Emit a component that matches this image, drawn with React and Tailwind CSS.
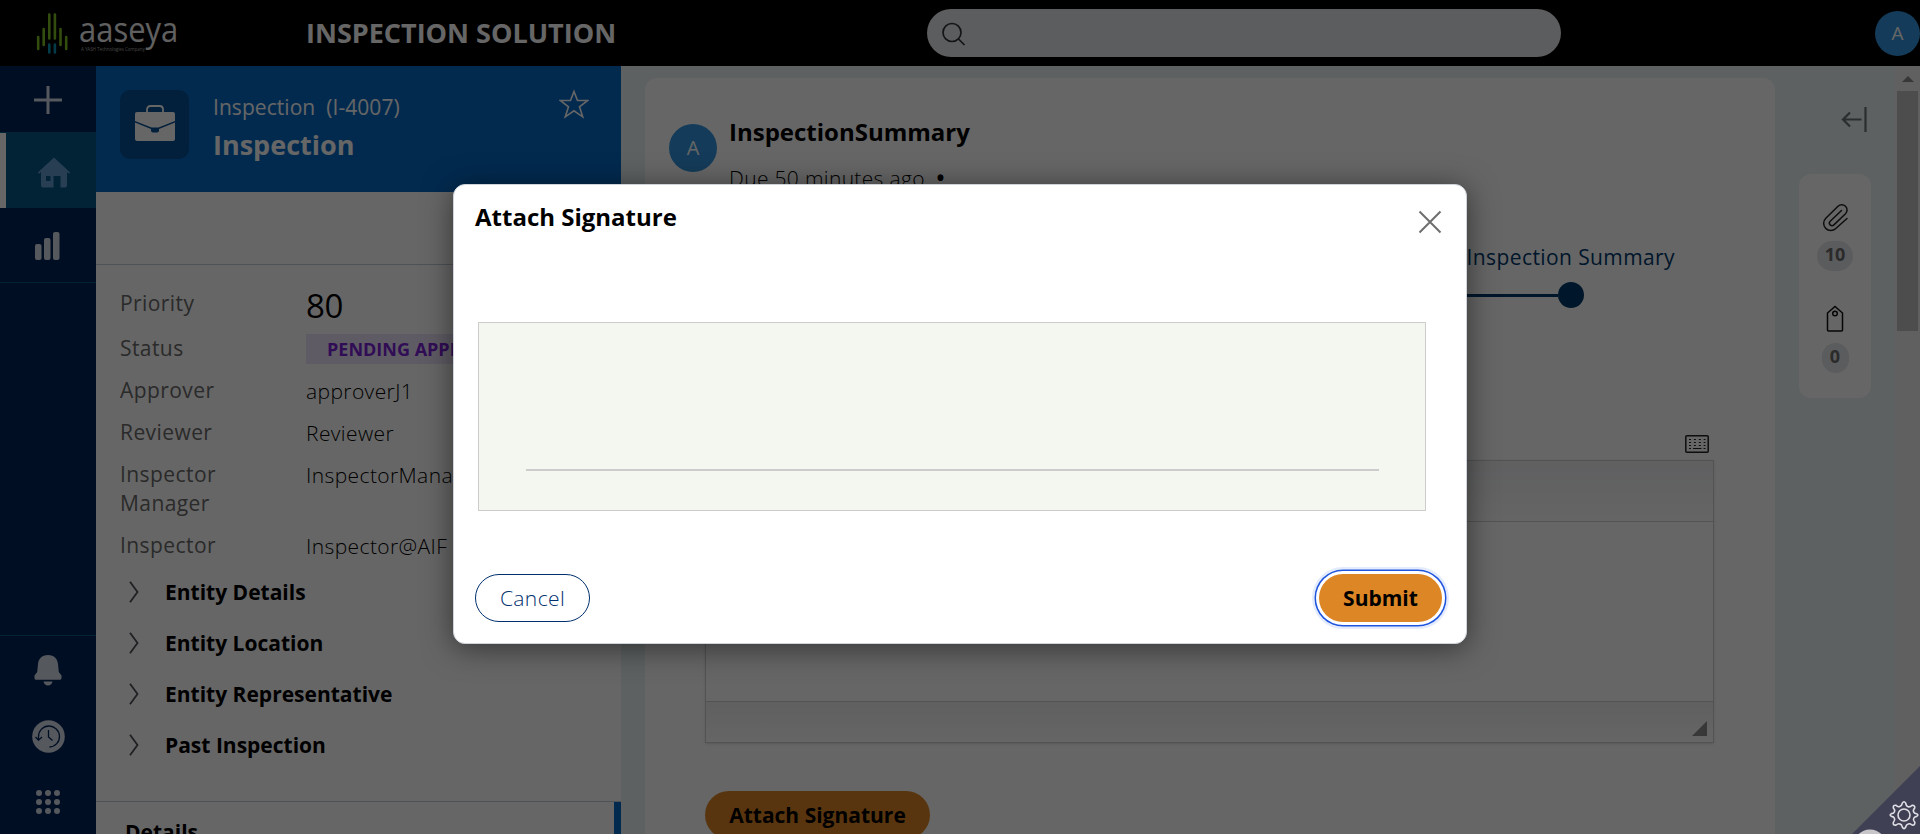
import React from "react";

const details = [
  { label: "Priority", value: "80", kind: "big", h: "h-[45px]" },
  { label: "Status", value: "PENDING APPROVAL", kind: "badge", h: "h-[42px]" },
  { label: "Approver", value: "approverJ1", h: "h-[42px]" },
  { label: "Reviewer", value: "Reviewer", h: "h-[42px]" },
  { label: "Inspector Manager", value: "InspectorManager@AIF", h: "h-[71px]" },
  { label: "Inspector", value: "Inspector@AIF", h: "h-[35px]" },
];

const sections = ["Entity Details", "Entity Location", "Entity Representative", "Past Inspection"];

function Logo() {
  return (
    <div className="ml-[36px] flex h-[66px] w-[270px] shrink-0 items-start">
      <svg className="mt-3 h-[44px] w-[34px]" viewBox="0 0 34 44" fill="none" strokeWidth="2.6" strokeLinecap="round">
        <path d="M2.2 25v12M7.7 17v16M13.3 2.500v24M18.900 2.500v24M24.500 17v16M30.200 25v12" stroke="#7fc023" />
        <path d="M13.300 32.500v8M18.900 32.500v8" stroke="#0a93b4" />
      </svg>
      <div className="flex h-[66px] w-[110px] flex-col pl-[9px] text-[#f0f0f0]">
        <div className="mt-[8px] h-[37px] w-[96px] origin-left scale-x-[0.91] text-[34px] leading-[42px] font-normal">aaseya</div>
        <div className="pl-[2px] text-[4.600px] leading-[8px] tracking-[-0.1px] whitespace-nowrap text-[#aaaaaa]">A YASH Technologies Company</div>
      </div>
    </div>
  );
}

function TopBar() {
  return (
    <header className="flex h-[66px] w-full shrink-0 bg-black">
      <Logo />
      <h1 className="w-[621px] text-[27px] leading-[66px] font-bold whitespace-nowrap text-white">INSPECTION SOLUTION</h1>
      <div className="mt-[9px] flex h-12 w-[634px] items-start rounded-full bg-[#e6e8ec] pt-[13px] pl-[15px]">
        <svg className="h-6 w-6" viewBox="0 0 24 24" fill="none" stroke="#30343c" strokeWidth="1.700">
          <circle cx="10" cy="10.500" r="9" />
          <path d="M16.500 17l6 6" />
        </svg>
      </div>
      <div className="mt-[11px] ml-auto flex size-[45px] items-center justify-center rounded-full bg-[#3295de] text-[19px] text-white">A</div>
    </header>
  );
}

function Sidebar() {
  return (
    <nav className="flex h-[768px] w-24 shrink-0 flex-col bg-[#00235a] text-[#d5dbe8]">
      <div className="flex h-[66px] items-center justify-center pt-[2px]">
        <svg className="size-7" viewBox="0 0 28 28" stroke="currentColor" strokeWidth="3"><path d="M14 0v28M0 14h28" /></svg>
      </div>
      <div className="flex h-[76px] items-start bg-[#055584]">
        <div className="mt-px h-[75px] w-[6px] bg-white" />
        <svg className="mt-[25px] ml-[31px] h-[32px] w-[34px] text-[#649bd0]" viewBox="0 0 34 32" fill="currentColor">
          <path fillRule="evenodd" d="M17 .5L.8 15.500l1 1.200L4 15v13.500a2 2 0 0 0 2 2h10.500V19h7v11.500H28a2 2 0 0 0 2-2V15l2.200 1.700 1-1.200zM9 19h4.500v5H9z" />
        </svg>
      </div>
      <div className="flex h-[75px] items-start border-b border-[#075a85] pt-[23px] pl-[35px]">
        <svg className="h-[30px] w-[26px]" viewBox="0 0 26 30" fill="currentColor">
          <rect x="0" y="13" width="6.500" height="16" rx="2" /><rect x="9" y="7" width="6.500" height="22" rx="2" /><rect x="18" y="1" width="6.500" height="28" rx="2" />
        </svg>
      </div>
      <div className="mt-auto flex h-[199px] flex-col items-center border-t border-[#075a85]">
        <svg className="mt-[19px] h-[31px] w-[28px]" viewBox="0 0 28 31" fill="currentColor">
          <path d="M14 0C7.500 0 4.500 4 4 9L3.200 17 .5 20.500V23c0 1 .7 1.800 1.700 1.800h23.600c1 0 1.700-.8 1.700-1.800v-2.500L24.800 17 24 9C23.500 4 20.500 0 14 0zM9.500 26.500h9c-.3 2.300-2 4-4.500 4s-4.200-1.700-4.500-4z" />
        </svg>
        <svg className="mt-[34px] size-[33px]" viewBox="0 0 33 33" fill="none">
          <circle cx="16.500" cy="16.500" r="16.300" fill="currentColor" />
          <path d="M6.500 20v-3.500a10.500 10.500 0 1 1 11 10.500M3.500 17l3 3.200 3.500-3.200M16.500 10v7l4 3.500" stroke="#00235a" strokeWidth="1.300" />
        </svg>
        <svg className="mt-[37px] h-[24px] w-[24px]" viewBox="0 0 24 24" fill="currentColor">
          {[3, 12, 21].map((y) => [3, 12, 21].map((x) => <circle key={x + "-" + y} cx={x} cy={y} r="3" />))}
        </svg>
      </div>
    </nav>
  );
}

function CasePanel() {
  return (
    <aside className="flex h-[768px] w-[525px] shrink-0 flex-col overflow-hidden bg-white">
      <div className="flex h-[126px] shrink-0 items-start bg-[#056ac6] pl-6 text-white">
        <div className="mt-6 flex size-[69px] items-start justify-center rounded-[10px] bg-[#054f94] pt-[15px]">
          <svg className="h-[37px] w-[40px]" viewBox="0 0 40 37" fill="white">
            <path d="M12 7V4.500C12 2.500 13.500 1 15.500 1h9C26.500 1 28 2.500 28 4.500V7" fill="none" stroke="white" strokeWidth="1.800" />
            <path d="M2 7h36a2 2 0 0 1 2 2v7L23.500 22.500h-7L0 16V9a2 2 0 0 1 2-2z" />
            <path d="M0 17.500L16 24v1.500a2 2 0 0 0 2 2h4a2 2 0 0 0 2-2V24l16-6.500V34a2 2 0 0 1-2 2H2a2 2 0 0 1-2-2z" />
          </svg>
        </div>
        <div className="ml-6 flex w-[346px] flex-col pt-[26px]">
          <div className="text-[21px] leading-[30px] tracking-[0.05px] whitespace-pre">Inspection  (I-4007)</div>
          <div className="mt-[4px] text-[27px] leading-[38px] font-bold">Inspection</div>
        </div>
        <svg className="mt-[23px] h-[30px] w-[30px]" viewBox="0 0 30 30" fill="none" stroke="white" strokeWidth="1.600">
          <path d="M15 2.500l3.500 9h10.300l-8.300 6.300 3.200 10L15 21.800 6.300 27.800l3.200-10L1.200 11.500h10.300z" />
        </svg>
      </div>
      <div className="h-[73px] shrink-0 border-b border-[#c4ccd4]" />
      <div className="flex shrink-0 flex-col pt-[24px] pl-6">
        {details.map((d) => (
          <div key={d.label} className={"flex items-start " + d.h}>
            <div className="w-[186px] pr-[70px] text-[21px] leading-[29px] font-medium tracking-[0.42px] text-[#6a6a6a]">{d.label}</div>
            {d.kind === "big" ? (
              <div className="-mt-[1px] text-[33px] leading-[36px] font-medium tracking-[-0.3px] text-black">{d.value}</div>
            ) : d.kind === "badge" ? (
              <div className="h-[30px] bg-[#eee4fb] px-[21px] text-[18px] leading-[30px] font-bold whitespace-nowrap text-[#7a22d8]">{d.value}</div>
            ) : (
              <div className="text-[21px] leading-[30px] font-light tracking-[0.4px] text-black">{d.value}</div>
            )}
          </div>
        ))}
      </div>
      <div className="flex shrink-0 flex-col">
        {sections.map((s) => (
          <div key={s} className="flex h-[51px] items-center pl-[33px]">
            <svg className="h-[22px] w-[10px]" viewBox="0 0 10 22" fill="none" stroke="#50505a" strokeWidth="1.800"><path d="M1 .8l7.500 10.200L1 21.200" /></svg>
            <div className="ml-[26px] text-[21px] leading-[30px] font-bold text-black">{s}</div>
          </div>
        ))}
      </div>
      <div className="mt-auto flex h-[33px] shrink-0 justify-between border-t border-[#c4ccd4]">
        <div className="pt-[15px] pl-[29px] text-[21px] leading-[30px] font-bold text-black">Details</div>
        <div className="w-[7px] bg-[#056ac6]" />
      </div>
    </aside>
  );
}

function WorkArea() {
  return (
    <main className="mt-3 ml-6 flex h-[756px] w-[1130px] shrink-0 flex-col overflow-hidden rounded-t-xl bg-white">
      <div className="flex h-[129px] shrink-0 pl-6">
        <div className="mt-[46px] flex size-12 items-center justify-center rounded-full bg-[#3295de] text-[20px] text-white">A</div>
        <div className="ml-[12px] flex flex-col text-black">
          <div className="mt-[37px] text-[24px] leading-[34px] font-bold">InspectionSummary</div>
          <div className="mt-[14px] text-[21px] leading-[30px] font-light tracking-[0.33px] whitespace-pre">Due 50 minutes ago  <span className="font-bold">•</span></div>
        </div>
      </div>
      <div className="mt-[33px] flex shrink-0 flex-col items-end pr-[100px]">
        <div className="text-[21px] leading-[35px] font-medium tracking-[0.4px] text-[#00396b]">Inspection Summary</div>
        <div className="mt-[7px] mr-[91px] flex items-center">
          <div className="h-[3px] w-[700px] bg-[#00396b]" />
          <div className="size-[26px] rounded-full bg-[#00396b]" />
        </div>
      </div>
      <div className="mt-[127px] flex shrink-0 justify-end pr-[66px]">
        <svg className="h-[18px] w-[24px]" viewBox="0 0 24 18" fill="none" stroke="#222222">
          <rect x=".8" y=".8" width="22.400" height="16.400" rx="1" strokeWidth="1.500" />
          <path d="M4 4.500h16.500M4 7.500h16.500M4 10.500h16.500" strokeDasharray="2 2.900" />
          <path d="M4 13.500h2M8 13.500h8.500M18.500 13.500h2" />
        </svg>
      </div>
      <div className="mt-[7px] ml-[60px] flex h-[283px] w-[1009px] shrink-0 flex-col border border-[#d0d0d0] shadow-sm">
        <div className="h-[61px] border-b border-[#d0d0d0] bg-linear-to-b from-[#eeeff2] to-[#fdfdfd]" />
        <div className="flex-1" />
        <div className="flex h-[41px] items-end justify-end border-t border-[#d0d0d0] bg-linear-to-b from-[#eeeff2] to-[#fdfdfd] pr-[6px] pb-[6px]">
          <svg className="size-[15px]" viewBox="0 0 15 15" fill="#8c8c8c"><path d="M15 0v15H0z" /></svg>
        </div>
      </div>
      <div className="mt-12 ml-[60px] h-12 w-[225px] shrink-0 rounded-full bg-[#dd8625] text-center text-[21px] leading-[48px] font-bold text-black">Attach Signature</div>
    </main>
  );
}

function Rail() {
  return (
    <div className="flex w-[120px] shrink-0 flex-col pl-6">
      <svg className="mt-[40px] ml-[42px] h-[27px] w-[27px]" viewBox="0 0 27 27" fill="none" stroke="#6e7272" strokeWidth="2.200"><path d="M24.500 1v25M20.500 13.500H2M9 6.500l-7 7 7 7" /></svg>
      <div className="mt-[41px] flex h-[224px] w-[72px] flex-col items-center rounded-xl bg-white pt-[29px]">
        <svg className="h-[29px] w-[27px]" viewBox="0 0 27 29" fill="none" stroke="#222222" strokeWidth="1.500" strokeLinecap="round">
          <path d="M19.500 7.500L8.200 18.200a2.600 2.600 0 0 0 3.700 3.700L23.500 10.800a5.300 5.300 0 0 0-7.500-7.500L3.800 15.300a7 7 0 0 0 10 10.200L25 15.500" />
        </svg>
        <div className="mt-[9px] h-[30px] w-[36px] rounded-full bg-[#e4e5ea] text-center text-[18px] leading-[27px] font-bold text-[#6b6b6b]">10</div>
        <svg className="mt-[34px] h-[28px] w-[18px]" viewBox="0 0 18 28" fill="none" stroke="#111111" strokeWidth="1.500"><path d="M1.500 8L9 1.500 16.500 8v17a1 1 0 0 1-1 1h-13a1 1 0 0 1-1-1z" /><circle cx="9" cy="8.500" r="2.300" /></svg>
        <div className="mt-[10px] h-[30px] w-[27px] rounded-full bg-[#e4e5ea] text-center text-[18px] leading-[27px] font-bold text-[#6b6b6b]">0</div>
      </div>
    </div>
  );
}

function Scrollbar() {
  return (
    <div className="flex w-[25px] shrink-0 flex-col items-center bg-[#f1f1f1] pt-[10px]">
      <svg className="h-[6px] w-[12px]" viewBox="0 0 12 6" fill="#8b8b8b"><path d="M6 0l6 6H0z" /></svg>
      <div className="mt-[9px] h-[240px] w-[21px] bg-[#c1c1c1]" />
    </div>
  );
}

function SignatureDialog() {
  return (
    <div className="flex h-[460px] w-[1014px] flex-col rounded-xl border border-[#cfd3da] bg-white px-[21px] shadow-[0_4px_30px_rgba(0,0,0,0.5)]">
      <div className="flex justify-between">
        <h2 className="mt-[15px] text-[24px] leading-[34px] font-bold text-black">Attach Signature</h2>
        <svg className="mt-[25px] mr-[3px] size-[24px]" viewBox="0 0 24 24" stroke="#6e6e6e" strokeWidth="2"><path d="M1.500 1.500l21 21M22.500 1.500l-21 21" /></svg>
      </div>
      <div className="mt-[88px] ml-[3px] flex h-[189px] w-[948px] items-end justify-center border border-[#cccccc] bg-[#f4f7f0] pb-[39px]">
        <div className="h-[2px] w-[853px] bg-[#cccccc]" />
      </div>
      <div className="mt-[63px] flex justify-between">
        <button className="h-12 w-[115px] rounded-full border border-[#00306e] pt-px text-[21px] font-light tracking-[0.38px] text-[#00306e]">Cancel</button>
        <button className="mr-[3px] h-12 w-[123px] rounded-full bg-[#dd8625] pt-[2px] text-[21px] font-bold text-black shadow-[0_0_0_3px_#fff,0_0_0_4.500px_#1f55dd,0_0_0_7px_#e3ebfd]">Submit</button>
      </div>
    </div>
  );
}

export default function App() {
  return (
    <div className="relative flex h-[834px] w-[1920px] flex-col overflow-hidden bg-[#e8f2f3] font-['Open_Sans',sans-serif]">
      <TopBar />
      <div className="flex flex-1">
        <Sidebar />
        <CasePanel />
        <WorkArea />
        <Rail />
        <Scrollbar />
      </div>
      <div className="absolute inset-0 flex items-start bg-black/60 pt-[184px] pl-[453px]">
        <SignatureDialog />
      </div>
      <svg className="absolute right-0 bottom-0 h-[68px] w-[68px]" viewBox="0 0 68 68" fill="none">
        <path d="M68 0v68H0z" fill="#404055" />
        <circle cx="18" cy="80" r="16.500" fill="#c9c6ca" />
        <g transform="translate(38 35)" stroke="#dedee4" strokeWidth="1.600" strokeLinejoin="round">
          <circle cx="14" cy="14" r="6" />
          <path d="M12.300 2.200Q14-.6 15.700 2.200q.3 3 2.500 3.500 1.800.6 3.900-1.300 3.200-.2 2.600 2.700-2 2.300-1 4.100.7 1.500 3 1.600Q29 14 26.700 15.400q-2.500.4-3.100 2.200-.8 1.600 1.200 3.800.3 3.200-2.800 2.600-2.100-1.800-3.800-1-2 .6-2.500 3-1.700 3.200-3.400 0-.4-2.600-2.500-3.100-1.600-.7-3.900 1.200-3.200.4-2.600-2.700 2-2.300 1.200-4-.6-1.700-3.100-2Q-1 14 1.400 12.600q2.600-.2 3.100-1.900.8-1.600-1.200-3.800Q3 3.700 6.100 4.400q2.100 1.900 3.700 1.200 2.100-.6 2.500-3.400z" />
        </g>
      </svg>
    </div>
  );
}
